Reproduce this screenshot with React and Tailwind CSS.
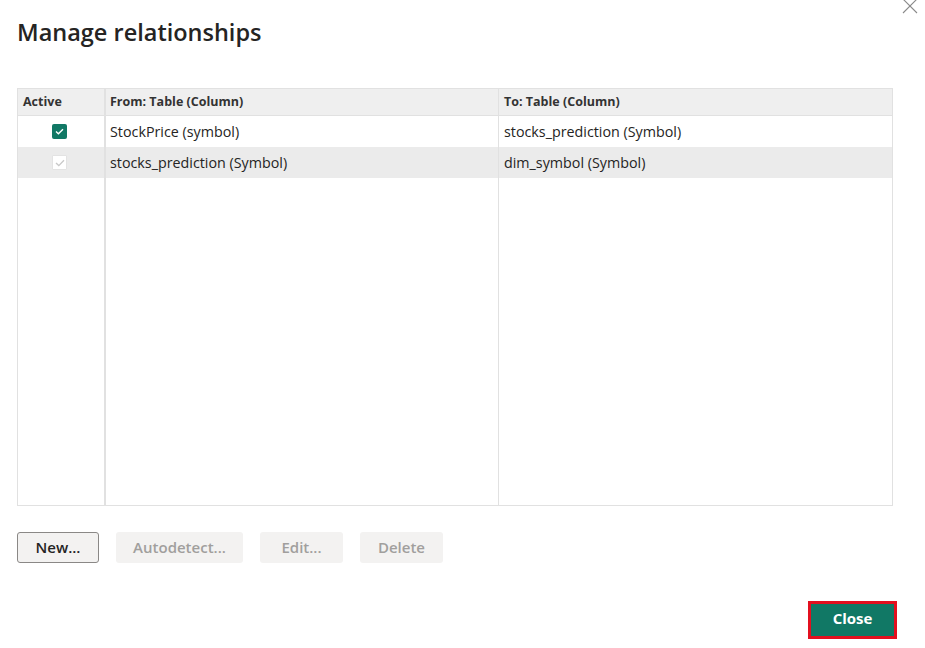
import React from "react";

const font = { fontFamily: '"Open Sans", "Noto Sans", sans-serif' };

function Check({ on }) {
  if (on) {
    return (
      <div className="w-[15px] h-[15px] rounded-[2px] bg-[#117865] flex items-center justify-center">
        <svg width="9" height="7" viewBox="0 0 9 7" fill="none">
          <path d="M1 3.6 L3.4 5.8 L8 1.2" stroke="white" strokeWidth="1.4" />
        </svg>
      </div>
    );
  }
  return (
    <div className="w-[15px] h-[15px] rounded-[1px] bg-white border border-[#e3e3e3] flex items-center justify-center">
      <svg width="10" height="8" viewBox="0 0 10 8" fill="none">
        <path d="M1 4 L3.8 6.6 L9 1.2" stroke="#c8c8c8" strokeWidth="1.3" />
      </svg>
    </div>
  );
}

function Row({ bg, on, from, to }) {
  return (
    <div className={`grid grid-cols-[86px_394px_1fr] h-[31px] ${bg}`}>
      <div className="flex items-center justify-center pr-[3px]">
        <Check on={on} />
      </div>
      <div className="border-l-2 border-[#e1e1e1] pl-[4px] flex items-center text-[14.3px] text-[#252423]">{from}</div>
      <div className="border-l border-[#e1e1e1] pl-[5px] flex items-center text-[14.3px] text-[#252423]">{to}</div>
    </div>
  );
}

export default function App() {
  return (
    <div className="relative w-[925px] h-[648px] bg-white overflow-hidden flex flex-col" style={font}>
      <div className="absolute right-[7px] top-[-2px] w-[16px] h-[16px]">
        <svg width="16" height="16" viewBox="0 0 16 16" fill="none">
          <path d="M1 1 L15 15 M15 1 L1 15" stroke="#8a8a8a" strokeWidth="1.1" />
        </svg>
      </div>

      <div className="mt-[14px] ml-[17px] h-[36px] leading-[36px] text-[23.5px] font-semibold text-[#252423]">
        Manage relationships
      </div>

      <div className="mt-[38px] ml-[17px] w-[876px] h-[418px] border border-[#e1e1e1] flex flex-col">
        <div className="grid grid-cols-[86px_394px_1fr] h-[27px] bg-[#efefef] border-b border-[#e1e1e1] text-[12.5px] font-bold text-[#333]">
          <div className="pl-[5px] flex items-center">Active</div>
          <div className="border-l-2 border-[#e1e1e1] pl-[4px] flex items-center">From: Table (Column)</div>
          <div className="border-l border-[#e1e1e1] pl-[5px] flex items-center">To: Table (Column)</div>
        </div>
        <Row bg="bg-white" on from="StockPrice (symbol)" to="stocks_prediction (Symbol)" />
        <Row bg="bg-[#ebebeb]" on={false} from="stocks_prediction (Symbol)" to="dim_symbol (Symbol)" />
        <div className="grid grid-cols-[86px_394px_1fr] flex-1">
          <div />
          <div className="border-l-2 border-[#e1e1e1]" />
          <div className="border-l border-[#e1e1e1]" />
        </div>
      </div>

      <div className="mt-[26px] ml-[17px] flex gap-[17px] text-[15px] font-semibold">
        <button className="w-[82px] h-[31px] pb-[1px] rounded-[3px] border border-[#8a8886] bg-[#f3f2f1] text-[#252423]">New...</button>
        <button className="w-[127px] h-[31px] pb-[1px] rounded-[3px] bg-[#f3f2f1] text-[#a19f9d]">Autodetect...</button>
        <button className="w-[83px] h-[31px] pb-[1px] rounded-[3px] bg-[#f3f2f1] text-[#a19f9d]">Edit...</button>
        <button className="w-[83px] h-[31px] pb-[1px] rounded-[3px] bg-[#f3f2f1] text-[#a19f9d]">Delete</button>
      </div>

      <div className="mt-[38px] mr-[28px] self-end">
        <div className="w-[89px] h-[38px] border-[3px] border-[#e3101f] p-0">
          <button className="w-full h-full pb-[3px] bg-[#117865] text-white text-[15px] font-bold">Close</button>
        </div>
      </div>
    </div>
  );
}
